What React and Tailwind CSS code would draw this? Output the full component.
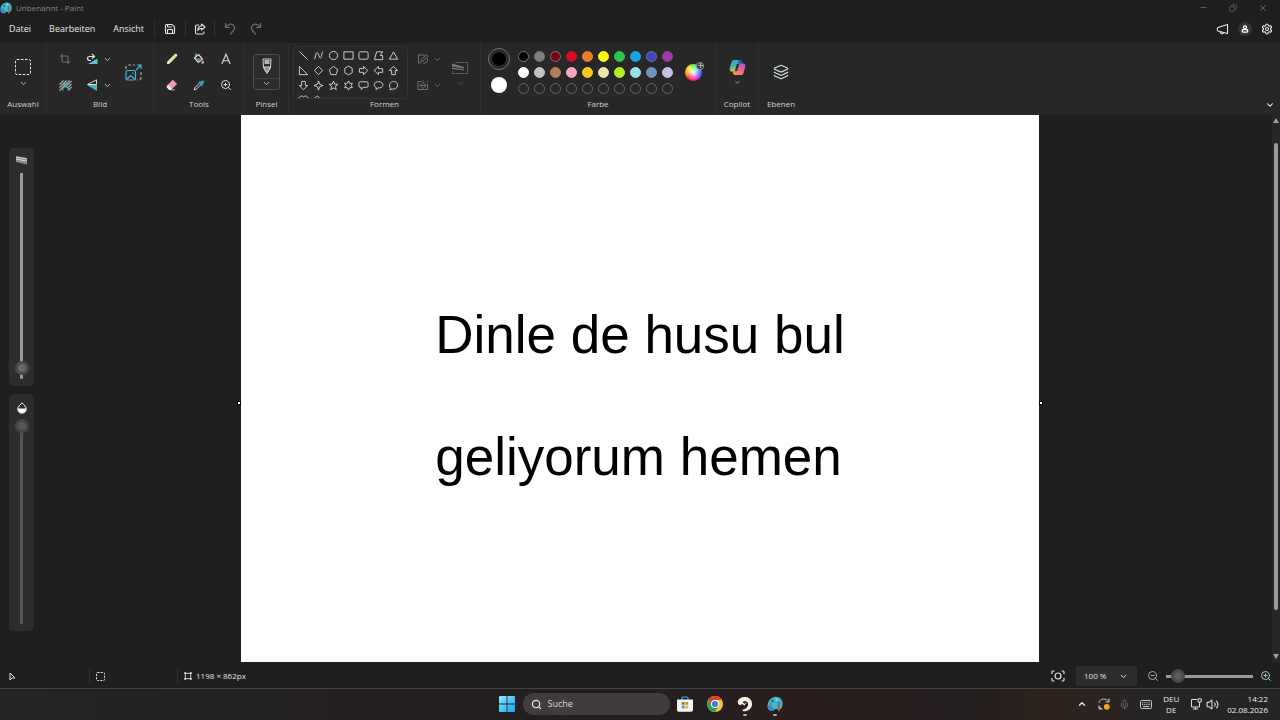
import {
  ChevronDown,
  ChevronUp,
  Copy,
  Crop,
  Layers,
  Mic,
  Minus,
  Save,
  Search,
  Settings,
  Volume2,
  X,
  ZoomIn,
  ZoomOut,
} from "lucide-react";
import clsx from "clsx";

const palette = [
  ["#000000", "#7f7f7f", "#7d0019", "#d80c25", "#ef7d2d", "#fdf80c", "#2fc552", "#15a7dc", "#3f46c4", "#9a3ea1"],
  ["#ffffff", "#c3c3c3", "#b57c5c", "#f2a6c2", "#fbcb1f", "#ece5ae", "#b5ee25", "#9bdfe6", "#7394bb", "#c7bfe4"],
  [null, null, null, null, null, null, null, null, null, null],
];

const shapes = [
  { name: "Linie", d: "M1.5 1.5 10.5 10.5" },
  { name: "Kurve", d: "M1 10C3 10 2.500 3 4.500 3S6.500 9 8 9 9.500 2 11 1.500" },
  { name: "Ellipse", d: "M6 1.500a4.500 4.500 0 1 0 0 9a4.500 4.500 0 1 0 0-9Z" },
  { name: "Rechteck", d: "M1 2h10v8H1Z" },
  { name: "Abgerundetes Rechteck", d: "M2.500 2h7a1.500 1.500 0 0 1 1.500 1.500v5A1.500 1.500 0 0 1 9.500 10h-7A1.500 1.500 0 0 1 1 8.500v-5A1.500 1.500 0 0 1 2.500 2Z" },
  { name: "Polygon", d: "M4 2h6.500L8 6h2.500v4.500H1.500Z" },
  { name: "Dreieck", d: "M6 2l4.500 8h-9Z" },
  { name: "Rechtwinkliges Dreieck", d: "M1.500 1.500v9h9Z" },
  { name: "Raute", d: "M6 1.500 10.500 6 6 10.500 1.500 6Z" },
  { name: "Fünfeck", d: "M6 1.500l4.500 3.500-1.700 5.500H3.200L1.500 5Z" },
  { name: "Sechseck", d: "M6 1.200l4 2.300v5L6 10.800 2 8.500v-5Z" },
  { name: "Pfeil rechts", d: "M1.500 4h4.500V1.500L10.700 6 6 10.500V8H1.500Z" },
  { name: "Pfeil links", d: "M10.500 4H6V1.500L1.300 6 6 10.500V8h4.500Z" },
  { name: "Pfeil oben", d: "M4 10.500V6H1.500L6 1.300 10.500 6H8v4.500Z" },
  { name: "Pfeil unten", d: "M4 1.500V6H1.500L6 10.700 10.500 6H8V1.500Z" },
  { name: "Stern mit 4 Zacken", d: "M6 1l1.300 3.700L11 6 7.300 7.300 6 11 4.700 7.300 1 6l3.700-1.300Z" },
  { name: "Stern mit 5 Zacken", d: "M6 1.200l1.300 3.300 3.500.2-2.700 2.200.9 3.600L6 8.600 3 10.500l.9-3.600L1.200 4.700l3.500-.2Z" },
  { name: "Stern mit 6 Zacken", d: "M6 1l1.300 2.600h3L8.800 6l1.500 2.400h-3L6 11 4.700 8.400h-3L3.200 6 1.700 3.600h3Z" },
  { name: "Rechteckige Legende", d: "M2.500 2h7A1.500 1.500 0 0 1 11 3.500v3A1.500 1.500 0 0 1 9.500 8H5.500L3.500 10.500V8h-1A1.500 1.500 0 0 1 1 6.500v-3A1.500 1.500 0 0 1 2.500 2Z" },
  { name: "Ovale Legende", d: "M3.500 8.300C-.5 6 1.500 1.800 6 1.800s6.500 4.500 3 6.200C7.800 8.700 6.500 8.700 5.500 8.600L3.300 10.500Z" },
  { name: "Wolkenlegende", d: "M3 9.300C-.3 5.500 3 1.500 6 1.500S11 4 10.500 6.500 7 10.500 4.500 9.800L2 10.800Z" },
  { name: "Herz", d: "M6 10.500 1.500 6C-.5 3 3-.5 6 2 9-.5 12.500 3 10.500 6Z" },
  { name: "Blitz", d: "M1.500 3.500 5 1l2.500 3 1 .5L10.500 11 5 7Z" },
];

function IconButton({ label, className, children }) {
  return (
    <button type="button" aria-label={label} className={clsx("flex items-center justify-center", className)}>
      {children}
    </button>
  );
}

function Chevron({ className }) {
  return <ChevronDown size={9} strokeWidth={2.5} className={className} />;
}

function Group({ label, className, children }) {
  return (
    <section className={clsx("flex shrink-0 flex-col border-r border-[#303030] pt-[3px] pb-[5px]", className)}>
      <div className="flex h-[52px] items-center justify-center">{children}</div>
      <h2 className="text-center text-[8px] leading-3 text-[#d2d2d2]">{label}</h2>
    </section>
  );
}

function PaintLogo({ size }) {
  return (
    <svg width={size} height={size} viewBox="0 0 16 16">
      <path d="M8.500.8C12.500.5 15.500 3.500 15.600 7.500c0 3.500-1 5.500-3 6-2 .4-3-1-4.200-.5-1.500.5-1.500 2-3.500 2C2 15 .3 12.500.6 9.500.9 5 4 1.200 8.500.8Z" fill="#3db9d6" />
      <path d="M.6 9.500C2.500 8.500 5.500 9.500 6.500 13 6 14.200 6 15 4.900 15 2 15 .3 12.500.6 9.500Z" fill="#2f86d4" />
      <circle cx="5.500" cy="5" r="1.500" fill="#2c8052" />
      <circle cx="3.800" cy="8.300" r="1.200" fill="#c8634d" />
      <circle cx="9.500" cy="3.500" r="1.100" fill="#9be7f2" />
      <path d="M10.500 6.500c.5-1.500 2.500-1.500 2.800 0L13 10l-.3 5.200h-1.800l-.3-5.200Z" fill="#9c6a4b" />
    </svg>
  );
}

function TitleBar() {
  return (
    <header className="flex h-[15px] items-center justify-between pr-[2px]">
      <div className="flex items-center gap-1">
        <PaintLogo size={12} />
        <h1 className="text-[8px] leading-3 text-[#858585]">Unbenannt - Paint</h1>
      </div>
      <div className="flex text-[#777]">
        <IconButton label="Minimieren" className="w-[30px]"><Minus size={9} /></IconButton>
        <IconButton label="Wiederherstellen" className="w-[30px]"><Copy size={8} className="-scale-x-100" /></IconButton>
        <IconButton label="Schließen" className="w-[30px]"><X size={10} /></IconButton>
      </div>
    </header>
  );
}

function MenuBar() {
  return (
    <nav className="flex h-7 items-center pr-[6px] text-[#e6e6e6]">
      <div className="flex gap-[18px] pr-[10px] pl-[9px] text-[9px] leading-3 font-medium">
        <button type="button">Datei</button>
        <button type="button">Bearbeiten</button>
        <button type="button">Ansicht</button>
      </div>
      <IconButton label="Speichern" className="h-4 w-[31px] border-l border-[#303030]"><Save size={12} strokeWidth={2.2} /></IconButton>
      <IconButton label="Freigeben" className="h-4 w-[30px] border-x border-[#303030]">
        <svg width="12" height="12" viewBox="0 0 12 12" fill="none" stroke="currentColor" strokeWidth="1.100" strokeLinejoin="round">
          <path d="M5 2H3A1.500 1.500 0 0 0 1.500 3.500v6A1.500 1.500 0 0 0 3 11h5.500A1.500 1.500 0 0 0 10 9.500V8.500" />
          <path d="M7.500 1 11 4 7.500 7V5.300C5.500 5.300 4.500 6 3.800 7.500 4 4.500 5.500 2.900 7.500 2.700Z" />
        </svg>
      </IconButton>
      <div className="flex text-[#6c6c6c]">
        <IconButton label="Rückgängig" className="w-[29px]">
          <svg width="12" height="12" viewBox="0 0 12 12" fill="none" stroke="currentColor" strokeWidth="1.200">
            <path d="M1.500 0v4.500h4.500M1.500 4.500C4 1 7 .5 9 2s2 4 .5 5.500L6 11.500" />
          </svg>
        </IconButton>
        <IconButton label="Wiederholen" className="w-6">
          <svg width="12" height="12" viewBox="0 0 12 12" fill="none" stroke="currentColor" strokeWidth="1.200">
            <path d="M10.500 0v4.500H6M10.500 4.500C8 1 5 .5 3 2S1 6 2.500 7.500L6 11.500" />
          </svg>
        </IconButton>
      </div>
      <div className="ml-auto flex items-center gap-2">
        <IconButton label="Feedback" className="w-4">
          <svg width="13" height="12" viewBox="0 0 13 12" fill="none" stroke="currentColor" strokeWidth="1.100" strokeLinejoin="round">
            <path d="M11.500 1.500v9L2 8C1 7.500 1 5 2 4.500ZM4 8.600c0 2.600 3.500 2.800 3.500.9" />
          </svg>
        </IconButton>
        <IconButton label="Konto" className="size-[14px] rounded-full bg-[#343434]">
          <svg width="8" height="8" viewBox="0 0 8 8" fill="none" stroke="#fff" strokeWidth="1.300">
            <circle cx="4" cy="2.300" r="1.500" />
            <rect x="1.200" y="4.500" width="5.600" height="2.700" rx="1.300" />
          </svg>
        </IconButton>
        <IconButton label="Einstellungen" className="w-[14px]"><Settings size={12} strokeWidth={2.3} /></IconButton>
      </div>
    </nav>
  );
}

function ImageTools() {
  return (
    <>
      <div className="grid grid-cols-[28px_25px_6px] grid-rows-[26px_26px]">
        <IconButton label="Zuschneiden" className="text-[#757575]"><Crop size={12} /></IconButton>
        <IconButton label="Drehen">
          <svg width="12" height="12" viewBox="0 0 12 12" fill="none">
            <path d="M11.500 5.500V11H2Z" fill="#62bfd8" />
            <path d="M8.500 3.500H4A2.500 2 0 0 0 4 7.500h1M6 1 8.500 3.500 6 5.800" stroke="#e0e0e0" strokeWidth="1.200" />
          </svg>
        </IconButton>
        <IconButton label="Drehoptionen"><Chevron className="shrink-0" /></IconButton>
        <IconButton label="Hintergrund entfernen">
          <svg width="13" height="12" viewBox="0 0 13 12" fill="none" stroke="#a8a8a8" strokeWidth="1.200">
            <path d="M.5 5.500 4.500 1.500M.5 8.500l7-7M.5 11.500l10-10M8.500 6l4-4M9 8.500l3.500-3.500M9.500 11l3-3" />
            <path d="M3.500 11.500c0-5 6-5 6 0M6.500 4a1.600 1.600 0 1 0 .1 0" stroke="#5cb5cc" />
          </svg>
        </IconButton>
        <IconButton label="Spiegeln">
          <svg width="12" height="12" viewBox="0 0 12 12">
            <path d="M11 6v6L1 6Z" fill="#4fb0d0" />
            <path d="M10.500 .8V5.500H1.500Z" fill="none" stroke="#d5d5d5" />
          </svg>
        </IconButton>
        <IconButton label="Spiegeloptionen"><Chevron className="shrink-0" /></IconButton>
      </div>
      <IconButton label="Größe ändern" className="mr-[6px] ml-[13px] w-5">
        <svg width="17" height="17" viewBox="0 0 17 17" fill="none">
          <path d="M1 5V3a2 2 0 0 1 2-2h7M16 8v6a2 2 0 0 1-2 2h-2" stroke="#a8a8a8" strokeWidth="1.200" strokeDasharray="3 2" />
          <rect x="1" y="6.500" width="9.500" height="9.500" rx="1.500" stroke="#50b4d8" strokeWidth="1.200" />
          <path d="M2 15l3.800-3.500L9.500 15M11 6l5-5M12 1h4v4" stroke="#50b4d8" strokeWidth="1.200" />
          <circle cx="7.800" cy="9.300" r=".8" fill="#50b4d8" />
        </svg>
      </IconButton>
    </>
  );
}

function DrawTools() {
  return (
    <div className="grid grid-cols-[27px_27px_27px] grid-rows-[26px_26px]">
      <IconButton label="Bleistift">
        <svg width="12" height="12" viewBox="0 0 12 12">
          <path d="M1 11l.8-3L8 1.800l2.200 2.200L4 10.200Z" fill="#e5e695" />
          <path d="M8 1.800 9 .9c1-.8 2.900 1 2.100 2.100l-.9 1Z" fill="#f4f4f4" />
          <path d="M1 11l.8-3L4 10.200Z" fill="#fafafa" />
        </svg>
      </IconButton>
      <IconButton label="Füllung">
        <svg width="12" height="12" viewBox="0 0 12 12" fill="none">
          <path d="M1.500 5 5.500 1.500 9.500 6 5.300 9.500Z" fill="#242424" stroke="#ddd" strokeWidth="1.200" />
          <path d="M2.800 5.500h5.500L5.300 8.300Z" fill="#45a9c4" />
          <path d="M3 3.500V.5M5.500 1.500 8 4" stroke="#ddd" />
          <path d="M10.200 7.200c2.600 4-3 4.500-1.600 1.800Z" fill="#f0a291" />
        </svg>
      </IconButton>
      <IconButton label="Text">
        <svg width="12" height="12" viewBox="0 0 12 12" fill="none" stroke="#ddd" strokeWidth="1.100">
          <path d="M1.800 11 6 1.200 10.200 11M3.300 7.700h5.400" />
        </svg>
      </IconButton>
      <IconButton label="Radierer">
        <svg width="12" height="12" viewBox="0 0 12 12">
          <path d="M6.800.8 11.200 5 6.500 9.500 2.300 5.300Z" fill="#f29bad" />
          <path d="M2.300 5.300 6.500 9.500 5 11H3L.8 8.500V7Z" fill="#f7e4e7" />
          <path d="M5 10.500h4v.8H5Z" fill="#ddd" />
        </svg>
      </IconButton>
      <IconButton label="Farbauswahl">
        <svg width="12" height="12" viewBox="0 0 12 12" fill="none">
          <path d="M6.500 4 1.800 8.800 1.200 10.800 3.200 10.200 8 5.500" stroke="#cfdfe5" />
          <path d="M5.500 3.200 6.700 2l1 .8C9 .2 12.200 2.300 10.800 4L9.200 5.300l.8 1L8.800 7.500Z" fill="#35a0cf" />
        </svg>
      </IconButton>
      <IconButton label="Bildschirmlupe" className="text-[#ddd]"><ZoomIn size={12} /></IconButton>
    </div>
  );
}

function ShapeTools() {
  return (
    <>
      <div className="grid h-[53px] shrink-0 grid-cols-[repeat(7,15px)] content-start overflow-hidden rounded-sm border border-[#343434] pt-px pr-[6px] pl-[2px]">
        {shapes.map((shape) => (
          <IconButton key={shape.name} label={shape.name} className="h-[15px]">
            <svg width="11" height="11" viewBox="0 0 12 12" fill="none" stroke="#d8d8d8">
              <path d={shape.d} />
            </svg>
          </IconButton>
        ))}
      </div>
      <div className="ml-2 grid grid-cols-[14px_14px] grid-rows-[26px_26px] text-[#707070]">
        <IconButton label="Formkontur">
          <svg width="12" height="12" viewBox="0 0 12 12" fill="none" stroke="currentColor">
            <path d="M8 2H1.500v8H4M10.500 5.500V8L8.500 10H6M4 8.500 4.500 6.500 9.500 1.500 11 3 6 8Z" />
          </svg>
        </IconButton>
        <IconButton label="Konturoptionen"><Chevron /></IconButton>
        <IconButton label="Formfüllung">
          <svg width="12" height="12" viewBox="0 0 12 12" fill="none" stroke="currentColor">
            <path d="M4 2.500H1v8h9.500V4.500M3 6.500 6 3.500l3 3-3 3ZM6 3.500V1.500M3 6.500h6M10.500 2v1" />
          </svg>
        </IconButton>
        <IconButton label="Fülloptionen"><Chevron /></IconButton>
      </div>
      <button type="button" aria-label="Größe" className="mr-[6px] ml-[6px] flex w-5 flex-col items-center gap-[5px] pt-[5px] text-[#5c5c5c]">
        <svg width="16" height="12" viewBox="0 0 16 12">
          <path d="M3 .5h12.500v11H.5V9" fill="none" stroke="currentColor" />
          <path d="M0 1.500 12 5v1.500L0 4.500ZM0 5.500l12 2v1L0 7Z" fill="#777" />
        </svg>
        <Chevron />
      </button>
    </>
  );
}

function Colors() {
  return (
    <>
      <div className="flex w-6 flex-col items-center gap-1">
        <IconButton label="Farbe 1" className="size-[22px] rounded-full border border-[#707070]">
          <span className="size-4 rounded-full border border-[#333] bg-black" />
        </IconButton>
        <IconButton label="Farbe 2" className="size-[22px]">
          <span className="size-4 rounded-full bg-white" />
        </IconButton>
      </div>
      <div className="ml-1 grid grid-cols-[repeat(10,16px)]">
        {palette.flat().map((color, i) => (
          <IconButton key={i} label={color ? "Farbe " + color : "Leer"} className="h-4">
            <span
              className="size-[11px] rounded-full border border-[#666]"
              style={color ? { backgroundColor: color, borderColor: i === 10 || (i > 2 && i !== 8) ? color : "#777" } : undefined}
            />
          </IconButton>
        ))}
      </div>
      <IconButton label="Farben bearbeiten" className="relative mr-[7px] ml-[10px] size-[17px] rounded-full bg-[radial-gradient(#fff,transparent_65%),conic-gradient(#5cf04b,#25d9e8,#3060ff,#b020ff,#ff2080,#ff3030,#ffa020,#ffe600,#5cf04b)]">
        <span className="absolute -top-[2px] -right-[2px] flex size-2 items-center justify-center rounded-full border border-[#999] bg-[#333]">
          <svg width="5" height="5" viewBox="0 0 5 5" stroke="#ccc" strokeWidth=".8" className="shrink-0"><path d="M2.500 0v5M0 2.500h5" /></svg>
        </span>
      </IconButton>
    </>
  );
}

function Ribbon() {
  return (
    <div className="flex bg-[#272727] text-[#c4c4c4]">
      <Group label="Auswahl" className="w-[47px]">
        <button type="button" aria-label="Auswahl" className="flex flex-col items-center gap-1 pt-[2px]">
          <svg width="16" height="16" viewBox="0 0 16 16" fill="none" stroke="#e8e8e8">
            <rect x=".5" y=".5" width="15" height="15" rx="1.500" strokeDasharray="2.500 1.500" />
          </svg>
          <Chevron />
        </button>
      </Group>
      <Group label="Bild" className="w-[107px]"><ImageTools /></Group>
      <Group label="Tools" className="w-[91px]"><DrawTools /></Group>
      <Group label="Pinsel" className="w-11">
        <button type="button" aria-label="Pinsel" className="flex h-9 w-[27px] flex-col items-center rounded-[3px] border border-[#4c4c4c] bg-[#2b2b2b]">
          <span className="flex h-6 w-full items-center justify-center border-b border-[#404040]">
            <svg width="10" height="17" viewBox="0 0 10 17" fill="none" stroke="#d5d5d5">
              <path d="M1 1h8L8.500 9.500 5 15.500 1.500 9.500Z" />
              <path d="M2.500 2h5v4h-5Z" fill="#b8b8b8" stroke="none" />
              <path d="M1.500 9h7L5.500 14.500h-1Z" fill="#8c8c8c" />
            </svg>
          </span>
          <Chevron />
        </button>
      </Group>
      <Group label="Formen" className="w-48"><ShapeTools /></Group>
      <Group label="Farbe" className="w-[235px]"><Colors /></Group>
      <Group label="Copilot" className="w-[43px]">
        <button type="button" aria-label="Copilot" className="flex flex-col items-center gap-[3px]">
          <svg width="17" height="17" viewBox="0 0 17 17">
            <defs>
              <linearGradient id="cp-a" x1="0" y1="0" x2=".3" y2="1">
                <stop stopColor="#32a6f0" /><stop offset=".55" stopColor="#38b6a6" /><stop offset="1" stopColor="#e6c339" />
              </linearGradient>
              <linearGradient id="cp-b" x1=".8" y1="0" x2=".3" y2="1">
                <stop stopColor="#a45ce8" /><stop offset=".5" stopColor="#ee5f8e" /><stop offset="1" stopColor="#f99a52" />
              </linearGradient>
            </defs>
            <path d="M5 1h6c1.500 0 1.800 2 2.500 3.500L9 5 6.500 12.500H2.500C.5 12.500.5 10 1 8L2.500 3C3 1.500 4 1 5 1Z" fill="url(#cp-a)" />
            <path d="M12 16H6c-1.500 0-1.800-1.500-2.500-3.500L8 12l2.500-7.500h4c2 0 2 2.500 1.500 4.500l-1.500 5c-.5 1.500-1.500 2-2.500 2Z" fill="url(#cp-b)" />
            <path d="M9.500 1h1.500c1.500 0 1.800 2 2.500 3.500H9Z" fill="#205bc6" />
            <path d="M8.500 5 6.500 12" stroke="#272727" strokeWidth="1.200" />
          </svg>
          <ChevronDown size={7} strokeWidth={2.5} />
        </button>
      </Group>
      <Group label="Ebenen" className="w-11 border-r-0">
        <IconButton label="Ebenen"><Layers size={16} strokeWidth={1.7} className="text-[#d5e4e8]" /></IconButton>
      </Group>
      <IconButton label="Menüband" className="mt-auto mr-[5px] mb-[5px] ml-auto text-white"><ChevronDown size={10} strokeWidth={2.5} /></IconButton>
    </div>
  );
}

function SidePanel({ label, value, track, thumb, children }) {
  return (
    <div className="flex min-h-0 w-[25px] flex-1 flex-col items-center rounded-[5px] bg-[#2d2d2d] pt-2 pb-[7px]">
      <div className="flex h-[17px] shrink-0 items-start justify-center">{children}</div>
      <input
        type="range"
        aria-label={label}
        defaultValue={value}
        className={clsx(
          "min-h-0 w-[14px] flex-1 appearance-none bg-[length:3px_100%] bg-center bg-no-repeat [direction:rtl] [writing-mode:vertical-lr]",
          "[&::-webkit-slider-thumb]:size-[14px] [&::-webkit-slider-thumb]:appearance-none [&::-webkit-slider-thumb]:rounded-full",
          track,
          thumb
        )}
      />
    </div>
  );
}

function Workspace() {
  return (
    <main className="flex min-h-[400px] flex-1">
      <aside className="flex w-60 shrink-0 flex-col gap-2 pt-[33px] pb-[31px] pl-[9px]">
        <SidePanel
          label="Größe"
          value={2}
          track="bg-[linear-gradient(#999,#999)]"
          thumb="[&::-webkit-slider-thumb]:bg-[radial-gradient(#686868_30%,#484848_50%)]"
        >
          <svg width="11" height="9" viewBox="0 0 11 9">
            <path d="M0 0 11 2v6.500L0 6Z" fill="#8a8a8a" />
            <path d="M0 1 11 3M0 3l11 2.200" stroke="#e5e5e5" strokeWidth=".8" />
          </svg>
        </SidePanel>
        <SidePanel
          label="Deckkraft"
          value={100}
          track="bg-[linear-gradient(#555,#555)]"
          thumb="[&::-webkit-slider-thumb]:bg-[radial-gradient(#585858_30%,#434343_50%)]"
        >
          <svg width="10" height="12" viewBox="0 0 10 12">
            <path d="M5 .8C3 3 .8 4.800.8 7a4.200 4.200 0 0 0 8.400 0C9.200 4.800 7 3 5 .8Z" fill="#2d2d2d" stroke="#fff" />
            <path d="M1 6.500h8C9.500 12.500.5 12.500 1 6.500Z" fill="#fff" />
          </svg>
        </SidePanel>
      </aside>

      <div className="relative flex min-w-0 flex-1 items-center justify-center border-x border-[#1f1f1f] bg-white bg-clip-padding pt-[14px]">
        <p className="font-['Liberation_Sans',Arial,sans-serif] text-[53px] leading-[61px] text-black">
          Dinle de husu bul
          <br />
          <br />
          geliyorum hemen
        </p>
        <span className="absolute top-[286px] -left-1 size-1 border border-black bg-white" />
        <span className="absolute top-[286px] -right-1 size-1 border border-black bg-white" />
      </div>

      <div className="flex w-60 shrink-0 justify-end">
        <div className="flex w-2 flex-col items-center justify-between bg-[#262626] py-[3px]">
          <svg width="6" height="5" viewBox="0 0 6 5"><path d="M3 0 6 5H0Z" fill="#a0a0a0" /></svg>
          <div className="mt-5 mb-11 w-1 flex-1 rounded-full bg-[#9b9b9b]" />
          <svg width="6" height="5" viewBox="0 0 6 5"><path d="M3 5 6 0H0Z" fill="#a0a0a0" /></svg>
        </div>
      </div>
    </main>
  );
}

function StatusBar() {
  return (
    <footer className="flex h-[26px] items-center pt-[2px] pr-2 pl-[9px] text-[8px] text-[#e0e0e0]">
      <div className="w-20">
        <svg width="7" height="9" viewBox="0 0 7 9" fill="none" stroke="currentColor"><path d="M1 1v7l2-2h3Z" /></svg>
      </div>
      <div className="flex h-4 w-[88px] items-center border-l border-[#303030] pl-[6px]">
        <svg width="9" height="9" viewBox="0 0 9 9" fill="none" stroke="currentColor">
          <rect x=".5" y=".5" width="8" height="8" rx="1" strokeDasharray="2 1.200" />
        </svg>
      </div>
      <div className="flex h-4 items-center gap-1 border-l border-[#303030] pl-[6px] font-medium">
        <svg width="8" height="8" viewBox="0 0 9 9" fill="none" stroke="currentColor">
          <path d="M1.500 1.500h6v6h-6Z" />
          <path d="M.3.300h2v2h-2ZM6.700.300h2v2h-2ZM.3 6.700h2v2h-2ZM6.700 6.700h2v2h-2Z" fill="currentColor" stroke="none" />
        </svg>
        1198 × 862px
      </div>
      <div className="ml-auto flex items-center">
        <IconButton label="An Fenster anpassen" className="mr-[11px]">
          <svg width="14" height="12" viewBox="0 0 14 12" fill="none" stroke="currentColor" strokeWidth="1.200">
            <circle cx="7" cy="6" r="3" />
            <path d="M3.500 1H2a1 1 0 0 0-1 1v2M10.500 1H12a1 1 0 0 1 1 1v2M3.500 11H2a1 1 0 0 1-1-1V8M10.500 11H12a1 1 0 0 0 1-1V8" />
          </svg>
        </IconButton>
        <div className="grid w-[61px] items-center">
          <select aria-label="Zoom" className="col-start-1 row-start-1 h-5 appearance-none rounded-[3px] bg-[#2d2d2d] pl-2 font-medium">
            <option>100 %</option>
          </select>
          <Chevron className="pointer-events-none col-start-1 row-start-1 mr-[9px] justify-self-end" />
        </div>
        <IconButton label="Verkleinern" className="ml-[10px] text-[#aaa]"><ZoomOut size={12} /></IconButton>
        <input
          type="range"
          aria-label="Zoomstufe"
          defaultValue={7}
          className="mx-[7px] h-[14px] w-[87px] appearance-none bg-[linear-gradient(#999,#999)] bg-[length:100%_3px] bg-center bg-no-repeat [&::-webkit-slider-thumb]:size-[14px] [&::-webkit-slider-thumb]:appearance-none [&::-webkit-slider-thumb]:rounded-full [&::-webkit-slider-thumb]:bg-[radial-gradient(#5c5c5c_30%,#484848_50%)]"
        />
        <IconButton label="Vergrößern" className="text-[#a5c8c8]"><ZoomIn size={12} /></IconButton>
      </div>
    </footer>
  );
}

function TaskbarApp({ label, running, children }) {
  return (
    <button type="button" aria-label={label} className="flex w-[30px] flex-col items-center gap-[2px] pt-[4px]">
      {children}
      <span className={clsx("h-[2px] w-1 rounded-full", running && "bg-[#aaa]")} />
    </button>
  );
}

function Taskbar() {
  return (
    <div className="grid h-8 grid-cols-[1fr_auto_1fr] items-center border-t border-[#444] bg-[linear-gradient(90deg,#242424_0%,#242322_18%,#241f1f_30%,#231f20_52%,#2a1d1d_62%,#241e1e_76%,#2e221d_82%,#262525_90%,#242424_100%)] pb-px text-[8px] text-[#eee]">
      <div />
      <div className="flex items-center pl-2">
        <IconButton label="Start">
          <svg width="16" height="16" viewBox="0 0 16 16">
            <defs>
              <linearGradient id="win" x1="0" y1="0" x2="1" y2="1">
                <stop stopColor="#8de9ff" /><stop offset="1" stopColor="#18a4ee" />
              </linearGradient>
            </defs>
            <path d="M1 0h6.600v7.600H0V1a1 1 0 0 1 1-1ZM8.400 0H15a1 1 0 0 1 1 1v6.600H8.400ZM0 8.400h7.600V16H1a1 1 0 0 1-1-1ZM8.400 8.400H16V15a1 1 0 0 1-1 1H8.400Z" fill="url(#win)" />
          </svg>
        </IconButton>
        <label className="ml-2 flex h-[22px] w-[147px] items-center gap-[6px] rounded-full bg-[#403c3d] px-2">
          <Search size={11} strokeWidth={2.5} className="shrink-0" />
          <input type="search" aria-label="Suche" placeholder="Suche" className="w-full min-w-0 bg-transparent text-[9px] placeholder:text-[#d5d5d5]" />
        </label>
        <TaskbarApp label="Microsoft Store">
          <svg width="16" height="16" viewBox="0 0 16 16">
            <path d="M5 4V2a1 1 0 0 1 1-1h4a1 1 0 0 1 1 1v2" fill="none" stroke="#36a9e0" strokeWidth="1.200" />
            <path d="M0 3.500h16V14a1.800 1.800 0 0 1-1.800 1.800H1.800A1.800 1.800 0 0 1 0 14Z" fill="#f4f4f4" />
            <path d="M4.800 6h2.800v2.800H4.800Z" fill="#e8502c" /><path d="M8.400 6h2.800v2.800H8.400Z" fill="#7cb928" />
            <path d="M4.800 9.600h2.800v2.800H4.800Z" fill="#2c9fe0" /><path d="M8.400 9.600h2.800v2.800H8.400Z" fill="#f5b51d" />
          </svg>
        </TaskbarApp>
        <TaskbarApp label="Chrome">
          <svg width="16" height="16" viewBox="0 0 16 16">
            <circle cx="8" cy="8" r="8" fill="#f8c62c" />
            <path d="M1.070 4A8 8 0 0 1 14.930 4H8L4.500 10Z" fill="#dd4030" />
            <path d="M1.070 4A8 8 0 0 0 8 16l3.500-6H4.500Z" fill="#2fa350" />
            <circle cx="8" cy="8" r="4" fill="#fff" />
            <circle cx="8" cy="8" r="3.100" fill="#3a7de8" />
          </svg>
        </TaskbarApp>
        <TaskbarApp label="Aufnahme" running>
          <svg width="16" height="16" viewBox="0 0 16 16">
            <path d="M.8 5.500C1.500 2 5 .5 9 1c4 .5 6.500 4 6 8-.5 3.500-3.500 6-7 6.300-1.500 0-2.500-.5-2.800-1.300C9 13 11 11 10.500 8.500L8 10.500 5.500 8 3.500 9C1.500 8.800.5 7.500.8 5.500Z" fill="#f3ede6" />
            <path d="M5.500 6.500C7 4.500 10.500 4.800 11 7.500c.3 2-1 3.500-3 3.700-1.300 0-2-.8-2-1.700 1 .5 2 .2 2.300-.7.3-1.200-1.500-1.800-2.800-2.300Z" fill="#1d1716" />
            <circle cx="8.800" cy="7.300" r=".8" fill="#d9a173" />
          </svg>
        </TaskbarApp>
        <TaskbarApp label="Paint" running><PaintLogo size={16} /></TaskbarApp>
      </div>

      <div className="flex items-center justify-end pr-3">
        <IconButton label="Ausgeblendete Symbole" className="w-[22px]"><ChevronUp size={10} strokeWidth={3} /></IconButton>
        <IconButton label="Update" className="w-[21px]">
          <svg width="12" height="12" viewBox="0 0 12 12" fill="none" stroke="#ccc">
            <path d="M1 5C1.500 0 9 0 10.500 3.500M11 .5v3.500H7.500M1 7.500v3.500h3.500M1 8c.5 1.500 1.500 2.500 3 2.800" />
            <circle cx="8.800" cy="8.800" r="2.900" fill="#f5a51c" stroke="none" />
          </svg>
        </IconButton>
        <IconButton label="Mikrofon" className="w-[21px] text-[#666]"><Mic size={11} /></IconButton>
        <IconButton label="Tastatur" className="w-[22px]">
          <svg width="12" height="9" viewBox="0 0 12 9" fill="none" stroke="#ccc">
            <rect x=".5" y=".5" width="11" height="8" rx="1" />
            <path d="M2 2.800h8M2 4.500h8" strokeDasharray="1 .8" />
            <path d="M3 6.500h6" />
          </svg>
        </IconButton>
        <button type="button" className="mr-1 w-7 text-center leading-[11px]">
          DEU
          <br />
          DE
        </button>
        <button type="button" aria-label="Netzwerk und Lautstärke" className="flex w-[31px] items-center justify-center gap-1 text-[#ddd]">
          <svg width="12" height="12" viewBox="0 0 12 12" fill="none" stroke="currentColor">
            <path d="M7 1.500H1.500v7.500h8V6M3 11h5M5.500 9v2M8 .8h3.200V4H8ZM9.600 4v2" />
          </svg>
          <Volume2 size={13} />
        </button>
        <button type="button" className="ml-[7px] text-right leading-[11px]">
          14:22
          <br />
          02.08.2026
        </button>
      </div>
    </div>
  );
}

export default function App() {
  return (
    <div className="flex min-h-screen flex-col bg-[#1f1f1f] font-['Open_Sans','Noto_Sans',sans-serif]">
      <TitleBar />
      <MenuBar />
      <Ribbon />
      <Workspace />
      <StatusBar />
      <Taskbar />
    </div>
  );
}
